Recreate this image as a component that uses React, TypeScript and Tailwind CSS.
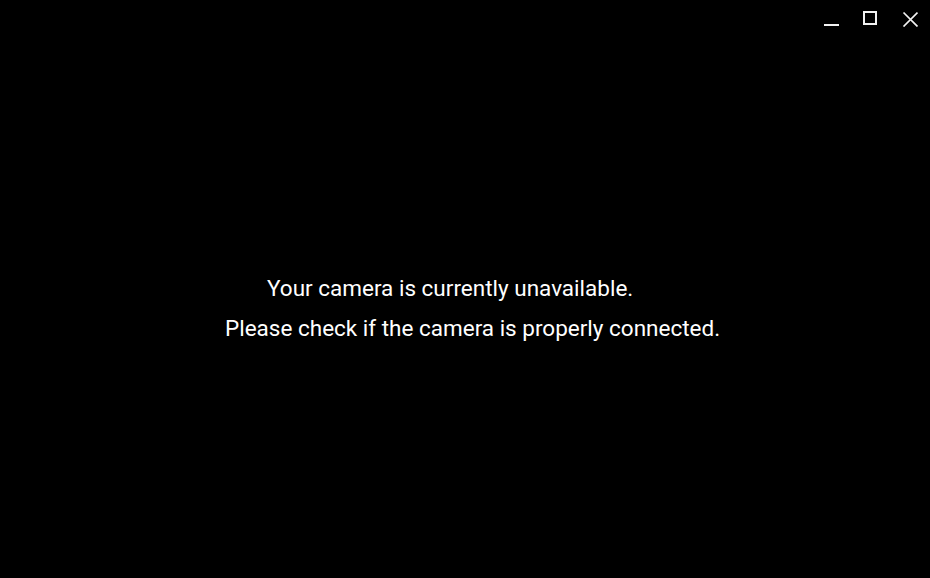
import React from "react";

export default function App() {
  return (
    <div className="w-[930px] h-[578px] bg-black text-white overflow-hidden flex flex-col" style={{ fontFamily: "Roboto, 'Liberation Sans', sans-serif" }}>
      <div className="flex justify-end items-start pt-[11px] pr-[12px] gap-[23px] h-[40px]">
        <svg width="16" height="16" viewBox="0 0 16 16">
          <rect x="1" y="13" width="15" height="2" fill="#f2f2f2" />
        </svg>
        <svg width="16" height="16" viewBox="0 0 16 16">
          <rect x="2" y="1" width="12" height="12" fill="none" stroke="#f2f2f2" strokeWidth="2" />
        </svg>
        <svg width="16" height="16" viewBox="0 0 16 16" className="ml-[1px]">
          <path d="M1.5 1.5 L15.5 15.5 M15.5 1.5 L1.5 15.5" stroke="#f2f2f2" strokeWidth="1.7" />
        </svg>
      </div>
      <div className="flex flex-col items-start pl-[225px] pt-[234px] text-[22.5px] leading-[28px]">
        <div className="ml-[42px]">Your camera is currently unavailable.</div>
        <div className="mt-[12px]">Please check if the camera is properly connected.</div>
      </div>
    </div>
  );
}
